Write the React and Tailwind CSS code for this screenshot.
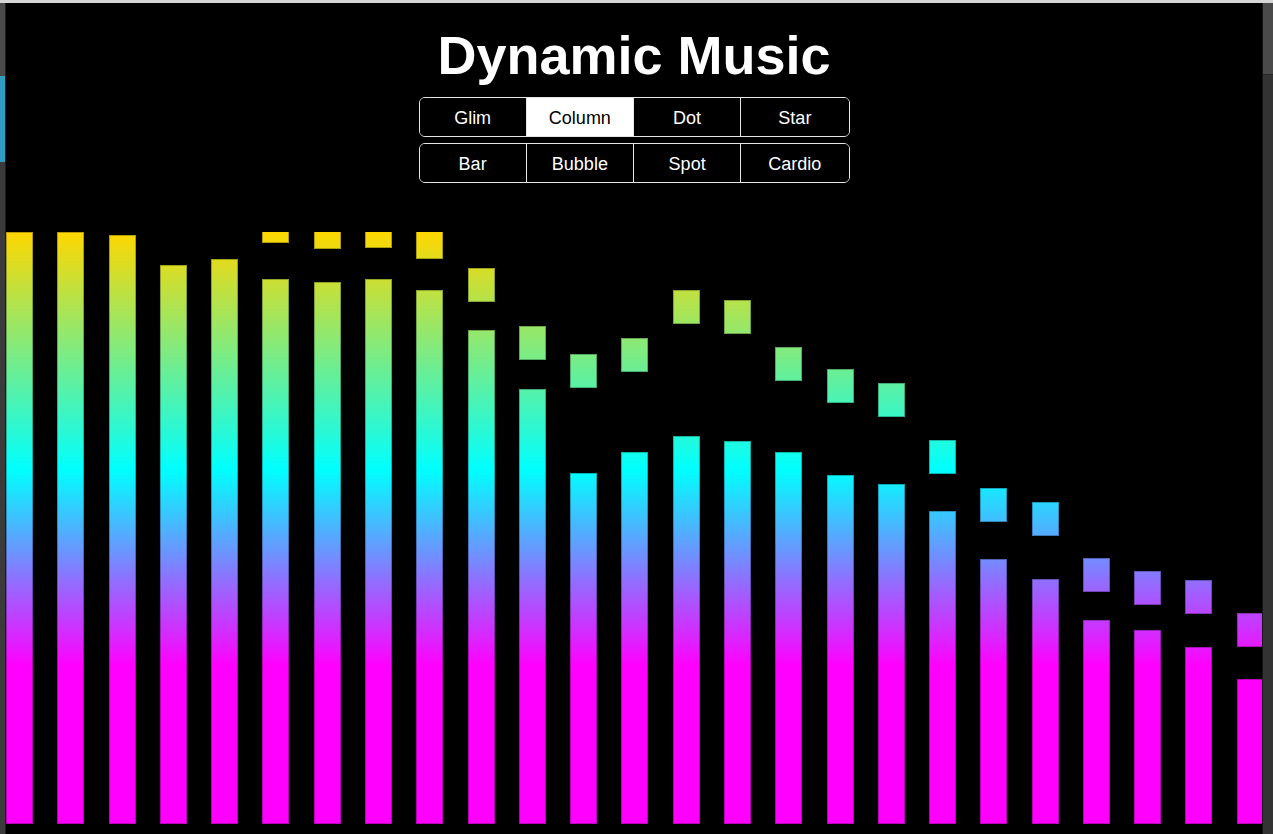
import { useState } from 'react';

const MODES = [
  ['Glim', 'Column', 'Dot', 'Star'],
  ['Bar', 'Bubble', 'Spot', 'Cardio'],
];

// top of the column and top of its falling cap, in page pixels (visual area is 232..824)
const BARS = [
  { col: 232, cap: null },
  { col: 232, cap: null },
  { col: 235, cap: null },
  { col: 265, cap: null },
  { col: 259, cap: null },
  { col: 279, cap: 209 },
  { col: 282, cap: 215 },
  { col: 279, cap: 214 },
  { col: 290, cap: 225 },
  { col: 330, cap: 268 },
  { col: 389, cap: 326 },
  { col: 473, cap: 354 },
  { col: 452, cap: 338 },
  { col: 436, cap: 290 },
  { col: 441, cap: 300 },
  { col: 452, cap: 347 },
  { col: 475, cap: 369 },
  { col: 484, cap: 383 },
  { col: 511, cap: 440 },
  { col: 559, cap: 488 },
  { col: 579, cap: 502 },
  { col: 620, cap: 558 },
  { col: 630, cap: 571 },
  { col: 647, cap: 580 },
  { col: 679, cap: 613 },
];

const AREA_BOTTOM = 824;
const CAP_HEIGHT = 34;

const fill =
  'bg-fixed bg-[linear-gradient(to_bottom,#ffd700_232px,#00ffff_470px,#ff00ff_666px,#ff00ff_834px)] shadow-[inset_0_0_0_1px_rgba(0,0,0,0.28)]';

const ModeRow = ({ modes, active, onPick }) => (
  <div className="grid w-[431px] grid-cols-4 overflow-hidden rounded-[6px] border border-[#e6e6e6]">
    {modes.map((mode, i) => (
      <button
        key={mode}
        type="button"
        onClick={() => onPick(mode)}
        className={`flex h-[38px] items-center justify-center pt-[2px] text-[18px] ${
          i < modes.length - 1 ? 'border-r border-[#e6e6e6]' : ''
        } ${active === mode ? 'bg-white text-black' : 'bg-black text-white'}`}
      >
        {mode}
      </button>
    ))}
  </div>
);

export default function App() {
  const [mode, setMode] = useState('Column');

  return (
    <div className="flex h-[834px] w-full flex-col overflow-hidden bg-black font-['Liberation_Sans',Arial,sans-serif]">
      <div className="h-[3px] shrink-0 bg-[#d6d6d6]" />
      <div className="flex min-h-0 flex-1">
        <div className="flex w-[6px] shrink-0 flex-col border-r border-[#1c1c1c]">
          <div className="h-[73px] bg-[#4a4a4a]" />
          <div className="h-[86px] bg-[#2f9cc2]" />
          <div className="flex-1 bg-[#3b3b3b]" />
        </div>

        <div className="flex min-w-0 flex-1 flex-col items-center overflow-hidden bg-black">
          <h1 className="mt-[21px] text-[54px] font-bold leading-[62px] text-white">Dynamic Music</h1>

          <div className="mt-[11px] flex flex-col gap-[6px]">
            {MODES.map((row) => (
              <ModeRow key={row[0]} modes={row} active={mode} onPick={setMode} />
            ))}
          </div>

          <div className="mt-[49px] flex h-[592px] w-full shrink-0 items-end gap-[24.29px] overflow-hidden">
            {BARS.map((bar, i) => (
              <div key={i} className="flex h-full w-[27px] shrink-0 flex-col justify-end">
                {bar.cap !== null ? (
                  <div
                    className={`h-[34px] shrink-0 ${fill}`}
                    style={{ marginBottom: bar.col - (bar.cap + CAP_HEIGHT) }}
                  />
                ) : null}
                <div className={`shrink-0 ${fill}`} style={{ height: AREA_BOTTOM - bar.col }} />
              </div>
            ))}
          </div>
        </div>

        <div className="flex w-[11px] shrink-0 flex-col border-l border-[#161616]">
          <div className="h-[72px] border-b border-[#232323] bg-[#4a4a4a]" />
          <div className="flex-1 bg-[#333333]" />
        </div>
      </div>
    </div>
  );
}
